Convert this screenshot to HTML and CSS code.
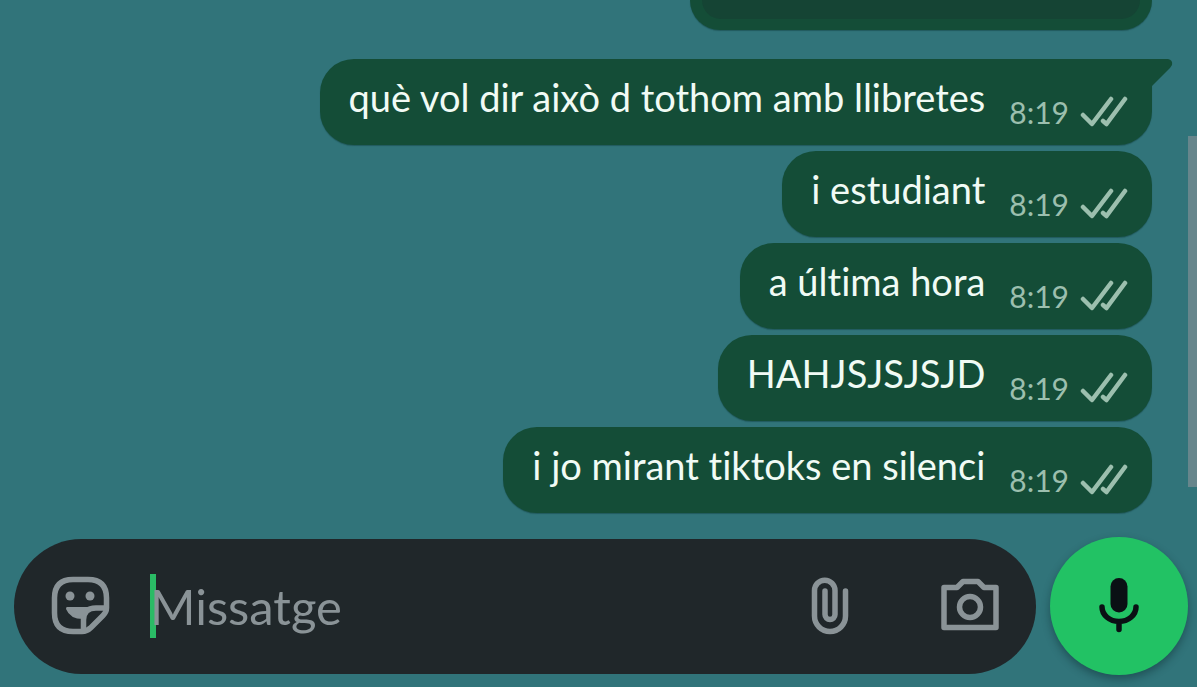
FILE: index.html
```html
<!DOCTYPE html>
<html lang="ca">
<head>
<meta charset="utf-8">
<meta name="viewport" content="width=device-width, initial-scale=1">
<title>Xat</title>
<link rel="stylesheet" href="styles.css">
</head>
<body>
<svg class="sprite" aria-hidden="true">
  <symbol id="ticks" viewBox="0 0 48 32">
    <path d="M3 19L12 28L31 3M23 25L26.500 28L45 3" fill="none" stroke="currentColor" stroke-width="4.500" stroke-linecap="round" stroke-linejoin="round"/>
  </symbol>
</svg>
<main class="chat">
  <section class="messages" aria-label="Missatges">
    <div class="bubble bubble-media"><div class="media"></div></div>
    <div class="bubble bubble-first">
      <p class="text">què vol dir això d tothom amb llibretes</p>
      <span class="meta"><time>8:19</time><svg class="ticks"><use href="#ticks"/></svg></span>
      <svg class="tail" viewBox="0 0 21 28" aria-hidden="true"><path d="M0 0H16Q21 1 20 6L18 9L0 27Z" fill="currentColor"/></svg>
    </div>
    <div class="bubble">
      <p class="text">i estudiant</p>
      <span class="meta"><time>8:19</time><svg class="ticks"><use href="#ticks"/></svg></span>
    </div>
    <div class="bubble">
      <p class="text">a última hora</p>
      <span class="meta"><time>8:19</time><svg class="ticks"><use href="#ticks"/></svg></span>
    </div>
    <div class="bubble">
      <p class="text">HAHJSJSJSJD</p>
      <span class="meta"><time>8:19</time><svg class="ticks"><use href="#ticks"/></svg></span>
    </div>
    <div class="bubble">
      <p class="text">i jo mirant tiktoks en silenci</p>
      <span class="meta"><time>8:19</time><svg class="ticks"><use href="#ticks"/></svg></span>
    </div>
  </section>
  <form class="composer">
    <div class="field">
      <button class="icon-button" type="button" aria-label="Adhesius">
        <svg class="icon" viewBox="0 0 60 60" fill="none" stroke="currentColor" stroke-width="5.500" stroke-linejoin="round">
          <path d="M22 3.500H37Q55.500 3.500 55.500 22V32Q55.500 36 52 39.500L40 51.500Q36 55.500 31 55.500H22Q3.500 55.500 3.500 37V22Q3.500 3.500 22 3.500Z"/>
          <path d="M55 32H45Q32.500 32 32.500 44V55"/>
          <path d="M16 31H41Q33 36 32 43Q19 43 15 33Q15 31 16 31Z" fill="currentColor" stroke="none"/>
          <circle cx="19" cy="20" r="4.500" fill="currentColor" stroke="none"/>
          <circle cx="39" cy="20" r="4.500" fill="currentColor" stroke="none"/>
        </svg>
      </button>
      <div class="entry">
        <span class="caret"></span>
        <input class="input" type="text" placeholder="Missatge" aria-label="Missatge">
      </div>
      <div class="actions">
        <button class="icon-button" type="button" aria-label="Adjunta">
          <svg class="icon" viewBox="0 0 60 60" fill="none" stroke="currentColor" stroke-width="5.500" stroke-linecap="round">
            <path d="M45.500 15V40A15.500 15.500 0 0 1 14.500 40V14.500A10.200 10.200 0 0 1 35 14.500V38.500A5 5 0 0 1 25 38.500V15"/>
          </svg>
        </button>
        <button class="icon-button" type="button" aria-label="Càmera">
          <svg class="icon" viewBox="0 0 60 60" fill="none" stroke="currentColor" stroke-width="5.500" stroke-linejoin="round">
            <path d="M4 11.500H17L23 5.500H38L44 11.500H56V51.500H4Z"/>
            <circle cx="30" cy="31" r="10.500"/>
          </svg>
        </button>
      </div>
    </div>
    <button class="mic" type="button" aria-label="Missatge de veu">
      <svg class="icon" viewBox="0 0 60 60" fill="none" stroke="currentColor" stroke-width="5.500" stroke-linecap="round">
        <rect x="21.500" y="2" width="17" height="34.500" rx="8.500" fill="currentColor" stroke="none"/>
        <path d="M13 31A17 14.500 0 0 0 47 31M30 46V53.500"/>
      </svg>
    </button>
  </form>
  <div class="scrollbar"></div>
</main>
</body>
</html>
```
FILE: styles.css
```css
* { box-sizing: border-box; }

body {
  margin: 0;
  background: #31747a;
  font-family: Lato, "Noto Sans", sans-serif;
  font-variant-ligatures: none;
}

.sprite { position: absolute; width: 0; height: 0; }

.chat {
  position: relative;
  display: flex;
  flex-direction: column;
  min-height: 100vh;
}

.messages {
  flex: 1;
  display: flex;
  flex-direction: column;
  align-items: flex-end;
  gap: 6px;
  padding: 0 45px 23px;
}

.bubble {
  position: relative;
  display: flex;
  align-items: flex-start;
  gap: 24px;
  min-height: 86px;
  padding: 15px 24px 15px 29px;
  border-radius: 34px;
  background: #144d37;
  color: #f1fbf5;
  box-shadow: 0 1px 1px rgba(10, 50, 50, 0.4);
}

.bubble-media {
  width: 462px;
  min-height: 30px;
  margin-bottom: 23px;
  padding: 0 12px 11px;
  border-radius: 0 0 34px 34px;
}

.media {
  flex: 1;
  height: 19px;
  border-radius: 0 0 22px 22px;
  background: #154434;
}

.bubble-first { border-top-right-radius: 0; }

.tail {
  position: absolute;
  top: 0;
  left: 100%;
  width: 21px;
  height: 28px;
  color: #144d37;
}

.text {
  margin: 0;
  font-size: 38px;
  line-height: 46px;
}

.meta {
  display: flex;
  align-items: center;
  gap: 11px;
  padding-top: 20px;
  color: #9cbfae;
  font-size: 30px;
  line-height: 36px;
}

.ticks { width: 48px; height: 32px; }

.composer {
  display: flex;
  align-items: center;
  gap: 14px;
  padding: 0 9px 12px 14px;
}

.field {
  flex: 1;
  display: flex;
  align-items: center;
  min-height: 135px;
  padding: 0 36px 0 37px;
  border-radius: 68px;
  background: #20272a;
}

.icon-button {
  padding: 0;
  border: 0;
  background: none;
  color: #8a9397;
}

.icon {
  display: block;
  width: 60px;
  height: 60px;
}

.entry {
  position: relative;
  flex: 1;
  min-width: 0;
  padding-left: 39px;
}

.caret {
  position: absolute;
  top: 0;
  left: 39px;
  width: 6px;
  height: 64px;
  background: #2abb65;
}

.input {
  position: relative;
  display: block;
  width: 100%;
  height: 64px;
  padding: 0;
  border: 0;
  outline: 0;
  background: none;
  color: #f1fbf5;
  font-family: inherit;
  font-size: 49px;
}

.input::placeholder { color: #8a9397; opacity: 1; }

.actions { display: flex; gap: 80px; }

.mic {
  display: grid;
  place-items: center;
  width: 138px;
  height: 138px;
  padding: 0;
  border: 0;
  border-radius: 50%;
  background: #22c264;
  color: #0a1014;
  box-shadow: 0 4px 8px rgba(10, 40, 45, 0.45);
}

.scrollbar {
  position: absolute;
  top: 136px;
  right: 0;
  bottom: 200px;
  width: 9px;
  background: #67868c;
}
```
